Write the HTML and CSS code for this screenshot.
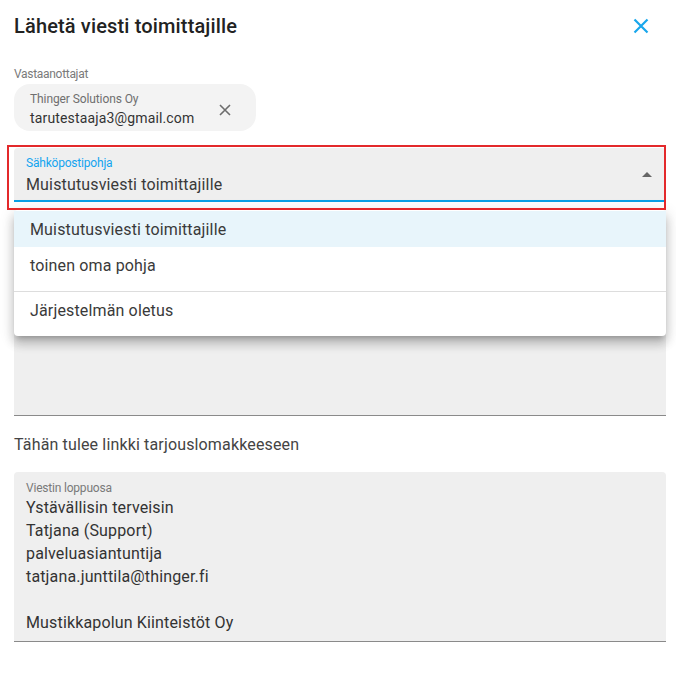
FILE: index.html
```html
<!DOCTYPE html>
<html lang="fi">
<head>
<meta charset="utf-8">
<title>Lähetä viesti toimittajille</title>
<link rel="stylesheet" href="styles.css">
</head>
<body>
<div class="dialog">
  <div class="header">
    <h1 class="title">Lähetä viesti toimittajille</h1>
    <span class="close" aria-label="Sulje">
      <svg width="24" height="24" viewBox="0 0 24 24"><path d="M5.5 5.5 18.5 18.5M18.5 5.5 5.5 18.5" stroke="#19a7ec" stroke-width="2.2" fill="none"/></svg>
    </span>
  </div>

  <div class="label-small">Vastaanottajat</div>
  <div class="chip">
    <div class="chip-text">
      <div class="chip-company">Thinger Solutions Oy</div>
      <div class="chip-email">tarutestaaja3@gmail.com</div>
    </div>
    <span class="chip-remove">
      <svg width="14" height="14" viewBox="0 0 14 14"><path d="M2 2 12 12M12 2 2 12" stroke="#6d6d6d" stroke-width="1.6" fill="none"/></svg>
    </span>
  </div>

  <div class="select-wrap">
    <div class="select-field">
      <div class="field-label focused">Sähköpostipohja</div>
      <div class="select-value">Muistutusviesti toimittajille</div>
      <span class="arrow"></span>
    </div>
    <div class="menu">
      <div class="menu-item active">Muistutusviesti toimittajille</div>
      <div class="menu-item">toinen oma pohja</div>
      <div class="menu-divider"></div>
      <div class="menu-item">Järjestelmän oletus</div>
    </div>
  </div>

  <div class="textarea first"></div>

  <p class="link-text">Tähän tulee linkki tarjouslomakkeeseen</p>

  <div class="textarea second">
    <div class="field-label">Viestin loppuosa</div>
    <div class="textarea-body">Ystävällisin terveisin<br>Tatjana (Support)<br>palveluasiantuntija<br>tatjana.junttila@thinger.fi<br><br>Mustikkapolun Kiinteistöt Oy</div>
  </div>
</div>
</body>
</html>
```

FILE: styles.css
```css
* { box-sizing: border-box; }

html, body {
  margin: 0;
  padding: 0;
  background: #ffffff;
}

body {
  font-family: Roboto, "Liberation Sans", Arial, sans-serif;
  color: #3a3a3a;
  letter-spacing: 0.15px;
}

.dialog {
  width: 676px;
  padding: 0 10px 0 14px;
  display: flex;
  flex-direction: column;
  align-items: stretch;
}

.header {
  display: flex;
  align-items: center;
  justify-content: space-between;
  padding: 14px 13px 0 0;
}

.title {
  margin: 0;
  font-size: 20px;
  line-height: 24px;
  font-weight: 500;
  color: #222222;
  letter-spacing: 0.15px;
}

.close {
  width: 24px;
  height: 24px;
  display: flex;
}

.label-small {
  margin-top: 28px;
  font-size: 12px;
  line-height: 16px;
  color: #7a7a7a;
  letter-spacing: -0.3px;
}

.chip {
  margin-top: 2px;
  width: 242px;
  height: 47px;
  background: #f3f3f3;
  border-radius: 16px;
  padding: 7px 0 2px 16px;
  display: flex;
  align-items: center;
  align-self: flex-start;
}

.chip-text {
  flex: 1;
  align-self: flex-start;
}

.chip-company {
  font-size: 12px;
  line-height: 16px;
  color: #6f6f6f;
  letter-spacing: -0.1px;
}

.chip-email {
  font-size: 14px;
  line-height: 22px;
  color: #333333;
  letter-spacing: 0.15px;
}

.chip-remove {
  width: 14px;
  height: 14px;
  display: flex;
  margin-right: 24px;
}

.select-wrap {
  position: relative;
  margin-top: 17px;
  z-index: 2;
}

.select-wrap::after {
  content: "";
  position: absolute;
  top: -3px;
  left: -7px;
  right: 0;
  bottom: -8px;
  border: 2px solid #e3292b;
  pointer-events: none;
}

.select-field {
  position: relative;
  height: 54px;
  background: #efefef;
  border-radius: 4px 4px 0 0;
  border-bottom: 2px solid #08a0e6;
  padding: 7px 12px 0 12px;
}

.field-label {
  font-size: 12px;
  line-height: 16px;
  color: #7a7a7a;
  letter-spacing: -0.2px;
}

.field-label.focused {
  color: #13a4ef;
}

.select-value {
  font-size: 16px;
  line-height: 27px;
  color: #3a3a3a;
}

.arrow {
  position: absolute;
  right: 14px;
  top: 24px;
  width: 0;
  height: 0;
  border-left: 5px solid transparent;
  border-right: 5px solid transparent;
  border-bottom: 5px solid #666666;
}

.menu {
  position: absolute;
  top: calc(100% + 8px);
  left: 0;
  right: 0;
  background: #ffffff;
  border-radius: 4px;
  padding: 1px 0 8px;
  box-shadow: 0 5px 5px -3px rgba(0,0,0,0.2), 0 8px 10px 1px rgba(0,0,0,0.14), 0 3px 14px 2px rgba(0,0,0,0.12);
}

.menu-item {
  height: 36px;
  display: flex;
  align-items: center;
  padding: 0 16px;
  font-size: 16px;
  color: #3a3a3a;
}

.menu-item.active {
  background: #e8f5fb;
}

.menu-divider {
  height: 1px;
  background: #dddddd;
  margin-top: 8px;
}

.textarea {
  background: #efefef;
  border-radius: 4px 4px 0 0;
  border-bottom: 1px solid #8a8a8a;
}

.textarea.first {
  margin-top: 16px;
  height: 198px;
}

.link-text {
  margin: 17px 0 0;
  font-size: 16px;
  line-height: 24px;
  color: #444444;
}

.textarea.second {
  margin-top: 15px;
  padding: 8px 12px 7px;
}

.textarea-body {
  font-size: 16px;
  line-height: 23px;
  color: #333333;
}
```
